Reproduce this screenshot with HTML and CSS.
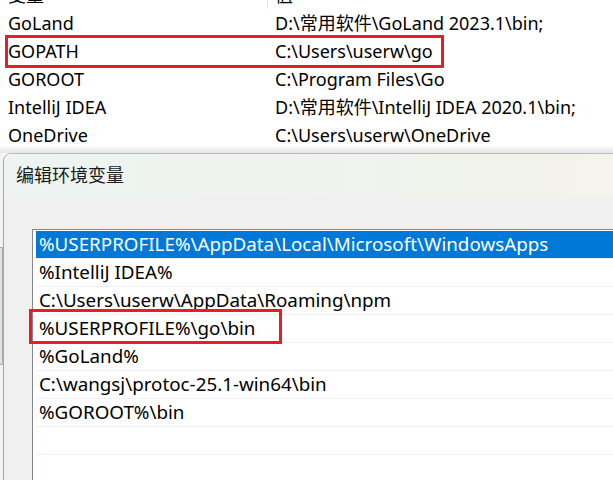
FILE: index.html
```html
<!DOCTYPE html>
<html lang="zh-CN">
<head>
<meta charset="utf-8">
<title>编辑环境变量</title>
<link rel="stylesheet" href="styles.css">
</head>
<body>
<div class="screen">
  <div class="vars">
    <div class="vars-inner">
      <div class="vrow head"><div class="c1">变量</div><div class="c2">值</div></div>
      <div class="vrow"><div class="c1">GoLand</div><div class="c2">D:\常用软件\GoLand 2023.1\bin;</div></div>
      <div class="vrow"><div class="c1">GOPATH</div><div class="c2">C:\Users\userw\go</div><span class="mark mark-a"></span></div>
      <div class="vrow"><div class="c1">GOROOT</div><div class="c2">C:\Program Files\Go</div></div>
      <div class="vrow"><div class="c1">IntelliJ IDEA</div><div class="c2">D:\常用软件\IntelliJ IDEA 2020.1\bin;</div></div>
      <div class="vrow"><div class="c1">OneDrive</div><div class="c2">C:\Users\userw\OneDrive</div></div>
    </div>
  </div>
  <div class="lower">
    <div class="behind"><div class="behind-btn"></div></div>
    <div class="dialog">
      <div class="titlebar">编辑环境变量</div>
      <div class="dbody">
        <div class="list">
          <div class="item sel">%USERPROFILE%\AppData\Local\Microsoft\WindowsApps</div>
          <div class="item">%IntelliJ IDEA%</div>
          <div class="item">C:\Users\userw\AppData\Roaming\npm</div>
          <div class="item">%USERPROFILE%\go\bin<span class="mark mark-b"></span></div>
          <div class="item">%GoLand%</div>
          <div class="item">C:\wangsj\protoc-25.1-win64\bin</div>
          <div class="item">%GOROOT%\bin</div>
          <div class="item empty"></div>
        </div>
      </div>
    </div>
  </div>
</div>
</body>
</html>
```

FILE: styles.css
```css
* { box-sizing: border-box; }
html, body { margin: 0; padding: 0; }
body {
  width: 613px;
  height: 480px;
  overflow: hidden;
  background: #ffffff;
  font-family: "Noto Sans", "Noto Sans CJK SC", sans-serif;
  font-size: 18px;
  color: #000;
}
.screen {
  width: 613px;
  height: 480px;
  display: flex;
  flex-direction: column;
  overflow: hidden;
}
.vars {
  height: 153px;
  flex: none;
  overflow: hidden;
  background: linear-gradient(#ffffff 0, #ffffff 145px, #e4e4e4 153px);
}
.vars-inner { margin-top: -19px; }
.vrow {
  position: relative;
  display: flex;
  height: 28px;
  line-height: 28px;
  white-space: nowrap;
}
.c1 { width: 268px; padding-left: 8px; flex: none; }
.c2 { padding-left: 7px; }
.head .c1 { border-right: 1px solid #e5e5e5; }
.head { height: 28px; }

.mark {
  position: absolute;
  border: 3px solid #e81d25;
  pointer-events: none;
}
.mark-a { left: 5px; top: -2px; width: 439px; height: 33px; }
.mark-b { left: -7px; top: -6px; width: 253px; height: 35px; }

.lower {
  flex: 1;
  display: flex;
  min-height: 0;
}
.behind {
  width: 3px;
  flex: none;
  background: #f3f3f3;
  padding-top: 94px;
}
.behind-btn {
  height: 118px;
  background: #e1e1e1;
  border-right: 1px solid #adadad;
  border-top: 1px solid #adadad;
  border-bottom: 1px solid #adadad;
}
.dialog {
  flex: 1;
  display: flex;
  flex-direction: column;
  border-top: 1px solid #bcbcbc;
  border-left: 1px solid #a8a8a8;
  border-top-left-radius: 8px;
  overflow: hidden;
  background: #f0f0f0;
}
.titlebar {
  height: 44px;
  flex: none;
  padding-left: 12px;
  padding-top: 8px;
  line-height: 26px;
  font-size: 18px;
  color: #1a1a1a;
  background: linear-gradient(90deg, #edf4f1 0%, #eff3ee 50%, #f4f3ec 100%);
}
.dbody {
  flex: 1;
  padding: 31px 0 0 28px;
}
.list {
  height: 100%;
  background: #ffffff;
  border-left: 1px solid #828790;
  border-top: 1px solid #828790;
  padding: 1px 0 0 3px;
  font-size: 18.8px;
}
.item {
  position: relative;
  height: 28px;
  line-height: 27px;
  padding-left: 3px;
  border-bottom: 1px solid #f0f0f0;
  white-space: nowrap;
}
.item.sel {
  background: #0078d7;
  color: #ffffff;
}
```
